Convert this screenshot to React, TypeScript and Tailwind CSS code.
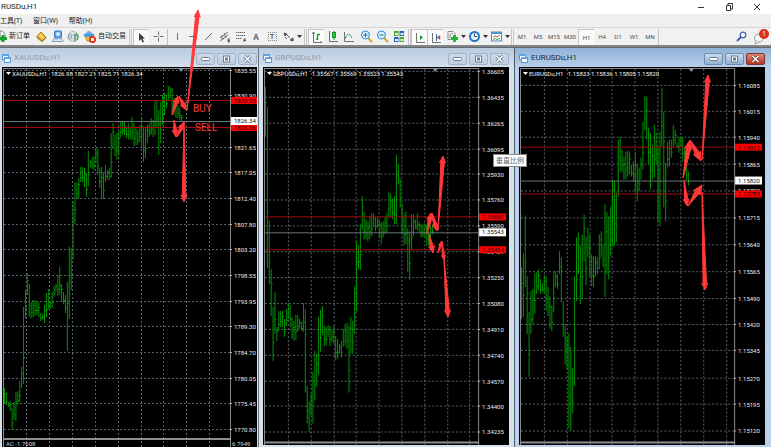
import React from 'react';

type Bar = [number, number];
type Level = { y: number; label: string };

interface ChartProps {
  viewBox: string;
  left: number;
  right: number;
  bottom: number;
  symbol: string;
  quote: string;
  gridX: number[];
  levels: Level[];
  bars: Bar[];
  orders: Level[];
  price: Level;
  marker: number;
  children?: React.ReactNode;
}

const xauBars: Bar[] = [
  [388, 403], [393, 405], [402, 407], [401, 411], [408, 430], [402, 420], [392, 421], [391, 405], [381, 402], [367, 388],
  [307, 384], [290, 318], [273, 295], [284, 317], [302, 318], [300, 317], [300, 316], [302, 315], [302, 317], [313, 321],
  [314, 319], [305, 323], [293, 317], [289, 309], [301, 309], [292, 308], [286, 297], [284, 292], [275, 296], [267, 295],
  [284, 302], [292, 304], [295, 313], [282, 351], [247, 319], [248, 290], [202, 260], [182, 224], [183, 198], [178, 199],
  [167, 182], [167, 182], [168, 187], [173, 197], [151, 186], [160, 168], [157, 169], [156, 170], [148, 163], [149, 175],
  [168, 188], [167, 199], [172, 199], [165, 182], [170, 180], [168, 180], [133, 178], [123, 149], [135, 156], [133, 160],
  [131, 155], [122, 137], [121, 135], [122, 135], [127, 138], [123, 140], [127, 139], [117, 140], [123, 146], [128, 145],
  [130, 145], [125, 142], [118, 146], [127, 162], [128, 158], [125, 143], [123, 137], [118, 135], [120, 137], [100, 135],
  [100, 127], [110, 155], [102, 143], [95, 125], [93, 115], [95, 108], [86, 100], [87, 98], [88, 115], [98, 115],
  [100, 118], [105, 118], [107, 120], [115, 122],
];

const gbpBars: Bar[] = [
  [87, 137], [107, 269], [221, 285], [270, 317], [308, 362], [293, 335], [328, 342], [312, 332], [312, 328], [312, 328],
  [320, 338], [310, 327], [304, 320], [306, 328], [318, 340], [322, 342], [316, 341], [316, 333], [320, 330], [323, 332],
  [304, 333], [310, 394], [387, 425], [403, 433], [395, 417], [373, 425], [352, 402], [355, 388], [318, 376], [311, 353],
  [307, 336], [327, 347], [328, 347], [326, 338], [327, 347], [330, 343], [327, 345], [337, 361], [340, 360], [345, 355],
  [342, 359], [330, 348], [325, 347], [324, 350], [327, 394], [318, 355], [322, 355], [287, 335], [242, 312], [246, 270],
  [225, 271], [197, 230], [213, 240], [220, 240], [222, 242], [217, 240], [214, 237], [214, 228], [218, 232], [218, 228],
  [220, 238], [223, 245], [222, 238], [218, 235], [214, 233], [192, 218], [194, 218], [199, 220], [197, 225], [155, 225],
  [164, 185], [179, 208], [204, 235], [215, 246], [212, 245], [229, 273], [232, 281], [215, 251], [215, 237], [220, 230],
  [214, 231], [222, 233], [225, 238], [225, 238], [224, 238], [225, 246], [232, 246], [225, 238], [225, 235],
];

const eurBars: Bar[] = [
  [268, 320], [254, 318], [216, 288], [277, 335], [313, 378], [292, 335], [290, 325], [274, 315], [273, 295], [270, 291],
  [280, 295], [284, 293], [276, 295], [277, 312], [288, 317], [297, 330], [307, 332], [272, 313], [272, 288], [275, 290],
  [252, 275], [258, 303], [302, 338], [327, 366], [338, 371], [334, 430], [348, 432], [369, 415], [277, 387], [238, 302],
  [233, 275], [247, 305], [235, 300], [215, 262], [237, 286], [228, 258], [235, 278], [255, 287], [257, 288], [257, 277],
  [258, 275], [235, 270], [232, 258], [245, 268], [205, 298], [213, 275], [217, 280], [207, 257], [180, 247], [182, 247],
  [193, 243], [140, 197], [137, 172], [150, 173], [157, 180], [152, 180], [151, 177], [152, 175], [165, 177], [162, 182],
  [153, 192], [165, 202], [168, 192], [158, 180], [122, 170], [96, 130], [97, 140], [128, 165], [133, 190], [145, 180],
  [125, 178], [133, 165], [147, 223], [132, 227], [88, 147], [112, 208], [163, 222], [142, 168], [140, 167], [140, 158],
  [125, 148], [130, 145], [143, 148], [137, 153], [137, 147], [137, 162], [148, 175], [158, 181], [172, 186],
];

const xauLevels: Level[] = [
  { y: 70, label: '1835.55' }, { y: 95, label: '1830.90' }, { y: 121, label: '' }, { y: 147, label: '1821.65' },
  { y: 172, label: '1817.05' }, { y: 198, label: '1812.40' }, { y: 224, label: '1807.80' }, { y: 249, label: '1803.20' },
  { y: 275, label: '1798.55' }, { y: 301, label: '1793.95' }, { y: 326, label: '1789.30' }, { y: 352, label: '1784.70' },
  { y: 378, label: '1780.05' }, { y: 403, label: '1775.45' }, { y: 429, label: '1770.80' },
];

const gbpLevels: Level[] = [
  { y: 71, label: '1.36605' }, { y: 97, label: '1.36435' }, { y: 123, label: '1.36265' }, { y: 149, label: '1.36095' },
  { y: 174, label: '1.35930' }, { y: 200, label: '1.35760' }, { y: 226, label: '1.35590' }, { y: 252, label: '1.35421' },
  { y: 278, label: '1.35250' }, { y: 304, label: '1.35080' }, { y: 330, label: '1.34910' }, { y: 356, label: '1.34740' },
  { y: 382, label: '1.34570' }, { y: 407, label: '1.34400' }, { y: 433, label: '1.34235' },
];

const eurLevels: Level[] = [
  { y: 85, label: '1.16085' }, { y: 111, label: '1.16015' }, { y: 137, label: '1.15940' }, { y: 164, label: '1.15865' },
  { y: 191, label: '1.15790' }, { y: 218, label: '1.15715' }, { y: 245, label: '1.15640' }, { y: 272, label: '1.15565' },
  { y: 299, label: '1.15490' }, { y: 325, label: '1.15420' }, { y: 351, label: '1.15345' }, { y: 379, label: '1.15270' },
  { y: 405, label: '1.15195' }, { y: 432, label: '1.15120' },
];

const Chart: React.FC<ChartProps> = (props) => {
  const { viewBox, left, right, bottom, symbol, quote, gridX, levels, bars, orders, price, marker, children } = props;
  return (
    <svg viewBox={viewBox} className="block w-full h-auto bg-black font-['Roboto',sans-serif] text-[6px]">
      {/* Grid */}
      <g stroke="#56636f" strokeWidth="1" strokeDasharray="2 2">
        {gridX.map((x) => (
          <line key={x} x1={x + 0.5} x2={x + 0.5} y1="69" y2="447" />
        ))}
        {levels.map((l) => (
          <line key={l.y} x1={left} x2={right} y1={l.y + 0.5} y2={l.y + 0.5} />
        ))}
      </g>

      {/* Price bars */}
      <g stroke="#009400" strokeWidth="1">
        {bars.map(([high, low], i) => {
          const x = left + 0.5 + i * 1.905;
          const open = Math.round(high + (low - high) * (i % 3 === 0 ? 0.3 : 0.65)) + 0.5;
          return <path key={i} d={`M${x} ${high}V${low}M${x} ${open}h1.500`} />;
        })}
      </g>

      {/* Frame */}
      <path d={`M${left - 0.5} 447V68.5H${right + 0.5}V447`} fill="none" stroke="#8c8c8c" />
      <rect x={left - 1} y={bottom} width={right - left + 2} height="2" fill="#8e8e8e" />
      <path d={`M${marker - 3} 68h6l-3 4z`} fill="#8195a8" />

      {levels.map((l) => (
        <g key={l.y}>
          <line x1={right} x2={right + 2} y1={l.y + 0.5} y2={l.y + 0.5} stroke="#b0b0b0" />
          <text x={right + 4} y={l.y + 3} fill="#ececec">{l.label}</text>
        </g>
      ))}

      {/* Order levels and current price */}
      <line x1={left} x2={right} y1={price.y + 0.5} y2={price.y + 0.5} stroke="#66727c" />
      {orders.map((o) => (
        <g key={o.y}>
          <line x1={left} x2={right} y1={o.y + 0.5} y2={o.y + 0.5} stroke="#a00a0a" />
          <rect x={right + 1} y={o.y - 3} width="27" height="7" fill="#ff0000" />
          <text x={right + 4} y={o.y + 3} fill="#2a0000">{o.label}</text>
        </g>
      ))}
      <rect x={right + 1} y={price.y - 4} width="27" height="8" fill="#ffffff" />
      <text x={right + 4} y={price.y + 2} fill="#111111">{price.label}</text>

      <path d={`M${left + 2} 72h5l-2.500 3z`} fill="#ffffff" />
      <text x={left + 8} y="76" fill="#f4f4f4">{symbol}</text>
      <text x={left + 47} y="76" fill="#f4f4f4">{quote}</text>
      {children}
    </svg>
  );
};

const ChartWindow: React.FC<{ title: string; active?: boolean; className: string; children: React.ReactNode }> = ({
  title,
  active,
  className,
  children,
}) => {
  const button = active
    ? 'w-[19px] h-3 rounded-[2px] border border-[#6f8cad] bg-linear-to-b from-[#c9dcf0] to-[#92b1d4] flex items-center justify-center'
    : 'w-[19px] h-3 rounded-[2px] border border-[#a3b3c5] bg-linear-to-b from-[#cddae8] to-[#bccddf] flex items-center justify-center';
  const close = active
    ? 'w-[19px] h-3 rounded-[2px] border border-[#7b3230] bg-linear-to-b from-[#dc8a7c] to-[#b83420] flex items-center justify-center'
    : button;
  return (
    <section
      className={`min-w-0 border-t border-[#5f6972] ${
        active ? 'bg-linear-to-b from-[#91b2d8] to-[#b9d1ea] to-5%' : 'bg-linear-to-b from-[#b9cbdf] to-[#d6e1ee] to-5%'
      } ${className}`}
    >
      <header className="h-[19px] flex items-center justify-between">
        <div className="flex items-center gap-[3px]">
          <svg width="9" height="10" viewBox="0 0 9 10">
            <path d="M.5 1.500h6v5h-6z" fill="#fff" stroke="#4e94dc" />
            <path d="M0 1h7v2H0z" fill="#5ba2e6" />
            <path d="M2.500 4.500h6v5h-6z" fill="#fff" stroke="#4e94dc" />
            <path d="M2 4h7v2H2z" fill="#5ba2e6" />
          </svg>
          <h2
            className={`font-['Roboto',sans-serif] text-[8px] leading-none ${
              active ? 'text-[#1c2733]' : 'text-[#8d99a6]'
            }`}
          >
            {title}
          </h2>
        </div>
        <div className="flex gap-0.5 pt-0.5">
          <button className={button} aria-label="Minimize">
            <svg width="9" height="4"><rect x=".5" y=".5" width="8" height="3" rx="1" fill="#fff" stroke="#697b8e" /></svg>
          </button>
          <button className={button} aria-label="Maximize">
            <svg width="9" height="8">
              <rect x="1.500" y="1" width="6" height="6" fill="#fff" stroke="#697b8e" />
              <rect x="3.500" y="3" width="2" height="2" fill="#9fb4ca" stroke="#697b8e" />
            </svg>
          </button>
          <button className={close} aria-label="Close">
            <svg width="9" height="8" fill="none">
              <path d="M1.500 1l6 6M7.500 1l-6 6" stroke={active ? '#6d2a25' : '#5d6e80'} strokeWidth="3" />
              <path d="M1.500 1l6 6M7.500 1l-6 6" stroke="#fff" strokeWidth="1.500" />
            </svg>
          </button>
        </div>
      </header>
      {children}
    </section>
  );
};

const Tool: React.FC<{ label: string; pressed?: boolean; wide?: string; children: React.ReactNode }> = ({
  label,
  pressed,
  wide,
  children,
}) => (
  <button
    aria-label={label}
    className={`${wide ?? 'w-4'} h-4 shrink-0 flex items-center justify-center gap-0.5 ${
      pressed ? 'border-l border-t border-[#c4c4c4] bg-[#fafafa]' : ''
    }`}
  >
    <svg width="13" height="13" viewBox="0 0 13 13" fill="none" stroke="#6f6f6f" className="shrink-0">
      {children}
    </svg>
    {wide && (
      <svg width="5" height="3" className="shrink-0"><path d="M0 0h5L2.500 3z" fill="#333" /></svg>
    )}
  </button>
);

const Divider = () => <div className="w-px h-4 shrink-0 bg-[#c2c2c2]" />;
const Grip = () => <div className="w-[3px] h-4 shrink-0 border-x border-[#c6c6c6]" />;

const periods = ['M1', 'M5', 'M15', 'M30', 'H1', 'H4', 'D1', 'W1', 'MN'];

const Toolbar = () => (
  <div className="h-[18px] flex items-center border-t border-[#d6d6d6] bg-[#f1f1f1] text-[7px] overflow-hidden">
    <button className="flex items-center gap-0.5 h-4 shrink-0">
      <svg width="7" height="13" viewBox="0 0 7 13">
        <path d="M0 1h2l3 3v6H0z" fill="#f4f4f4" stroke="#888" />
        <path d="M3 5v7M0 8.500h7" stroke="#14a52a" strokeWidth="3" />
      </svg>
      新订单
    </button>
    <div className="flex pl-[3px]">
      <Tool label="Metaeditor">
        <path d="M2 6l4-4 5 5-4 4z" fill="#f2c04a" stroke="#b9801a" />
        <path d="M2 6v2l5 4 4-4V7l-4 4z" fill="#c98f22" stroke="#a87014" strokeWidth=".5" />
        <path d="M5 5l3 3" stroke="#fff1b8" />
      </Tool>
      <Tool label="Data center">
        <rect x="3.500" y="1" width="7" height="7" rx="1" fill="#5da3e4" stroke="#3a7fc4" />
        <circle cx="7" cy="4" r="2" fill="#d5eaff" stroke="none" />
        <path d="M1.500 11.500c0-3 3-3 4-2 1-2 5-1 5 0 2 0 2 2 1 2z" fill="#dbe8f5" stroke="#7c9dbd" />
      </Tool>
      <Tool label="Signals">
        <circle cx="6" cy="6.500" r="5" fill="#e1e5e8" stroke="#b4bcc2" />
        <path d="M3 3a5 5 0 0 0 0 7M5 4a4 4 0 0 0 0 5" stroke="#7993a8" />
        <circle cx="8" cy="5.500" r="1.500" fill="#5b8fb8" stroke="none" />
        <path d="M8 7v4.500M9 3a5 5 0 0 1 1 7" stroke="#4ba455" strokeWidth="1.500" />
      </Tool>
    </div>
    <button className="flex items-center gap-0.5 h-4 shrink-0 pl-0.5">
      <svg width="13" height="13" viewBox="0 0 13 13">
        <path d="M2 6h8l-1 5H4z" fill="#f3c232" stroke="#b98a16" />
        <ellipse cx="6" cy="5" rx="5.500" ry="2" fill="#4f97d6" />
        <path d="M3 4c0-4 6-4 6 0z" fill="#6db1e8" />
        <circle cx="9.500" cy="9.500" r="3.500" fill="#e0301e" />
        <rect x="8" y="8" width="3" height="3" fill="#fff" />
      </svg>
      自动交易
    </button>
    <div className="flex items-center pl-[3px] gap-px">
      <Grip />
      <Tool label="Cursor" pressed>
        <path d="M4 2v8l2-2 1.500 3.500 1.500-.7L7.500 7.500H10z" fill="#3c3c3c" stroke="none" />
      </Tool>
      <Tool label="Crosshair"><path d="M6.500 1.500v4M6.500 7.500v4M1.500 6.500h4M7.500 6.500h4" /></Tool>
      <Divider />
    </div>
    <div className="flex items-center">
      <Tool label="Vertical line"><path d="M7.500 3v7" /></Tool>
      <Tool label="Horizontal line"><path d="M3 6.500h7" /></Tool>
      <Tool label="Trendline"><path d="M3 10l7-7" /></Tool>
      <Tool label="Channel">
        <path d="M2 8l8-6M2 11l8-6M3 5l2 5M6 3l2 5" />
        <path d="M12 9h-2v3h2M10 10.500h2" stroke="#333" strokeWidth=".8" />
      </Tool>
      <Tool label="Fibonacci">
        <path d="M2 2.500h9M2 5.500h9M2 8.500h6" strokeDasharray="1.500 .5" />
        <path d="M10 12V9h2M10 10.500h2" stroke="#333" strokeWidth=".8" />
      </Tool>
    </div>
    <button className="w-4 shrink-0 text-[8px] font-bold text-[#666]">A</button>
    <button className="w-4 shrink-0 flex justify-center" aria-label="Text label">
      <span className="w-[9px] h-[9px] border border-dotted border-[#888] text-[7px] leading-[7px] font-bold text-[#666]">T</span>
    </button>
    <Tool label="Arrows" wide="w-6">
      <path d="M2 3l3 1-2 2zM5 5l3 3M8 10l3-2v3zM3 7.500l2 1" fill="#555" stroke="#555" />
    </Tool>
    <Grip />
    <div className="flex items-center pl-px">
      <Tool label="Bar chart" pressed>
        <path d="M3.500 1v10.500H12M2 3l1.500-2L5 3M10.500 10l1.500 1.500" />
        <path d="M7.500 3v6M7 8H6M8 3.500h2" stroke="#159a2c" strokeWidth="1.300" />
      </Tool>
      <Tool label="Candlesticks">
        <path d="M3.500 1v10.500H12" />
        <path d="M8 1v9" stroke="#159a2c" />
        <rect x="6.500" y="2.500" width="3" height="5" fill="#29c13e" stroke="#159a2c" />
      </Tool>
      <Tool label="Line chart">
        <path d="M2.500 2v9.500H12" />
        <path d="M3 9c2-6 5-6 7-1" stroke="#3c9a4a" />
      </Tool>
    </div>
    <div className="flex px-0.5">
      <Tool label="Zoom in">
        <path d="M8 8l4 4" stroke="#d3a52c" strokeWidth="2" />
        <circle cx="5.500" cy="5" r="4" fill="#d9eeff" stroke="#3286cc" />
        <path d="M3.500 5h4M5.500 3v4" stroke="#1e6fb6" />
      </Tool>
      <Tool label="Zoom out">
        <path d="M8 8l4 4" stroke="#d3a52c" strokeWidth="2" />
        <circle cx="5.500" cy="5" r="4" fill="#d9eeff" stroke="#3286cc" />
        <path d="M3.500 5h4" stroke="#1e6fb6" />
      </Tool>
      <Tool label="Tile windows">
        <path d="M2 1h4.500v5H2zM7.500 7H12v5H7.500z" fill="#48a82c" stroke="none" />
        <path d="M7.500 1H12v5H7.500zM2 7h4.500v5H2z" fill="#2a61b8" stroke="none" />
        <path d="M3 3h3v2H3zM8.500 3h3v2h-3zM3 9h3v2H3zM8.500 9h3v2h-3z" fill="#e4f0e8" stroke="none" />
      </Tool>
    </div>
    <Grip />
    <div className="flex items-center pr-0.5">
      <Tool label="Auto scroll" pressed>
        <path d="M3.500 2v9.500H12" />
        <path d="M7 4l3 2.500L7 9z" fill="#159a2c" stroke="none" />
      </Tool>
      <Tool label="Chart shift" pressed>
        <path d="M3.500 2v9.500H12" />
        <path d="M7.500 3v7" stroke="#2a6cab" />
        <path d="M8 6.500l3-2v4z" fill="#cb4a20" stroke="#cb4a20" strokeWidth=".5" />
      </Tool>
    </div>
    <div className="flex items-center">
      <Tool label="Indicators" wide="w-[22px]">
        <path d="M2 1.500h5l2 2v6H2z" fill="#fff" stroke="#8a8a8a" />
        <path d="M4 8c0-5 1-5 3-4" />
        <path d="M8.500 5v7M5 8.500h7" stroke="#1cb332" strokeWidth="2.800" />
      </Tool>
      <Tool label="Periods" wide="w-[22px]">
        <circle cx="6.500" cy="6.500" r="4.500" fill="#eef6ff" stroke="#2374c8" strokeWidth="2" />
        <path d="M6.500 3.500v3H9" stroke="#36495b" />
      </Tool>
      <Tool label="Templates" wide="w-[22px]">
        <rect x="1.500" y="2" width="10" height="9" fill="#fff" stroke="#5486b4" />
        <path d="M1 3h11" stroke="#4d97d8" strokeWidth="2" />
        <path d="M3 7l2-1 2 1 3-2" stroke="#b05a40" />
        <path d="M3 9.500l2-1 2 1 3-1" stroke="#349a54" />
      </Tool>
      <Grip />
    </div>
    <div className="flex items-center text-[#4f4f4f] text-[6px] font-['Roboto',sans-serif]">
      {periods.map((p) => (
        <button
          key={p}
          className={`w-4 h-4 shrink-0 text-center ${p === 'H1' ? 'border-l border-t border-[#c4c4c4] bg-[#fafafa]' : ''}`}
        >
          {p}
        </button>
      ))}
    </div>
    <Divider />
    <div className="ml-auto flex items-center gap-1 pr-0.5">
      <Tool label="Search">
        <path d="M6 7l-4 4" stroke="#3b62b5" strokeWidth="2" />
        <circle cx="8" cy="5" r="2.800" fill="#fff" stroke="#3b62b5" strokeWidth="1.300" />
      </Tool>
      <button className="relative w-4 h-4 shrink-0" aria-label="Notifications">
        <svg width="16" height="16" viewBox="0 0 16 16">
          <ellipse cx="6" cy="9" rx="4.500" ry="4" fill="#f5f5f5" stroke="#9c9c9c" />
          <path d="M3 11l-1 4 4-2" fill="#e6e6e6" stroke="#9c9c9c" strokeWidth=".8" />
        </svg>
        <span className="absolute right-0 top-0 w-[10px] h-[10px] rounded-full bg-[#dc2f1d] text-white text-[7px] leading-[10px] text-center">
          1
        </span>
      </button>
    </div>
  </div>
);

// Tapered arrow: a point at the tail, widest just behind the head
const Arrow = ({ from, to, size = 4 }: { from: Bar; to: Bar; size?: number }) => {
  const dx = to[0] - from[0];
  const dy = to[1] - from[1];
  const len = Math.hypot(dx, dy);
  const ux = dx / len;
  const uy = dy / len;
  const at = (back: number, side: number) =>
    `${to[0] - ux * back - uy * side},${to[1] - uy * back + ux * side}`;
  const points = [
    `${from[0]},${from[1]}`,
    at(size * 2, size * 0.6),
    at(size * 2.3, size),
    `${to[0]},${to[1]}`,
    at(size * 2.3, -size),
    at(size * 2, -size * 0.6),
  ].join(' ');
  return <polygon points={points} fill="#ff3838" stroke="#ff3838" strokeWidth="1" strokeLinejoin="round" />;
};

const arrows: { from: Bar; to: Bar; size?: number }[] = [
  { from: [187, 110], to: [198, 10], size: 3 },
  { from: [172, 115], to: [178, 96], size: 3 },
  { from: [179, 96], to: [186, 110], size: 3 },
  { from: [174, 120], to: [176, 137], size: 3 },
  { from: [177, 137], to: [184, 122], size: 3 },
  { from: [184, 122], to: [184, 202], size: 3 },
  { from: [427, 234], to: [431, 213], size: 3 },
  { from: [432, 213], to: [437, 231], size: 3 },
  { from: [438, 230], to: [443, 156], size: 3 },
  { from: [429, 234], to: [433, 253], size: 3 },
  { from: [438, 253], to: [442, 241], size: 2 },
  { from: [442, 242], to: [444, 260], size: 2 },
  { from: [444, 258], to: [448, 317], size: 3 },
  { from: [683, 178], to: [690, 140], size: 4 },
  { from: [691, 141], to: [701, 161], size: 4 },
  { from: [702, 160], to: [708, 75], size: 3 },
  { from: [684, 180], to: [687, 206], size: 3 },
  { from: [688, 206], to: [702, 185], size: 4 },
  { from: [702, 192], to: [705, 290], size: 3 },
];

export default function App() {
  return (
    <div className="relative min-h-screen overflow-hidden bg-[#8b9197] font-['Noto_Sans','Noto_Sans_CJK_SC',sans-serif] text-[#222] select-none">
      {/* Title bar */}
      <div className="h-3.5 flex items-center justify-between bg-white">
        <h1 className="pl-px font-['Roboto',sans-serif] text-[8px] leading-none">RUSDu,H1</h1>
        <div className="flex items-center gap-4 pr-2">
          <button aria-label="Minimize"><svg width="12" height="8" className="block"><path d="M3 4.500h6" stroke="#333" /></svg></button>
          <button aria-label="Restore">
            <svg width="12" height="8" className="block" fill="none" stroke="#333"><path d="M3.500 2.500h4v5h-4zM5 2V.500h4.500V6H8" /></svg>
          </button>
          <button aria-label="Close"><svg width="12" height="8" className="block"><path d="M3 1l6 6M9 1L3 7" stroke="#333" /></svg></button>
        </div>
      </div>

      {/* Menu */}
      <nav className="h-[13px] flex items-center gap-[11px] bg-[#efefef] text-[7px] leading-none">
        <button>工具(T)</button>
        <button>窗口(W)</button>
        <button>帮助(H)</button>
      </nav>

      <Toolbar />

      {/* Chart windows */}
      <main className="grid grid-cols-[258fr_256fr_257fr] border-t-2 border-[#858585]">
        <ChartWindow title="XAUUSDu,H1" className="pl-[2px] pr-px">
          <Chart
            viewBox="2 67 255 380" left={4} right={230} bottom={438} marker={181}
            symbol="XAUUSDu,H1" quote="1826.98 1827.21 1825.71 1826.34"
            gridX={[26, 49, 72, 95, 118, 141, 163, 186, 209]}
            levels={xauLevels} bars={xauBars}
            orders={[{ y: 100, label: '1830.05' }, { y: 127, label: '1825.06' }]}
            price={{ y: 121, label: '1826.34' }}
          >
            <text x="6" y="446" fill="#d8d8d8">AC -1.7608</text>
            <text x="232" y="446" fill="#d8d8d8">6.7949</text>
          </Chart>
        </ChartWindow>
        <ChartWindow title="GBPUSDu,H1" className="pl-1 pr-[5px] border-l border-l-[#6c7882]">
          <Chart
            viewBox="262 67 247 380" left={264} right={478} bottom={443} marker={435}
            symbol="GBPUSDu,H1" quote="1.35567 1.35569 1.35523 1.35543"
            gridX={[287, 310, 333, 355, 378, 401, 424, 447, 469]}
            levels={gbpLevels} bars={gbpBars}
            orders={[{ y: 217, label: '1.35650' }, { y: 250, label: '1.35434' }]}
            price={{ y: 233, label: '1.35543' }}
          />
        </ChartWindow>
        <ChartWindow title="EURUSDu,H1" active className="pl-1 pr-[6px] border-l border-l-[#4d5b68]">
          <Chart
            viewBox="518 67 247 380" left={520} right={734} bottom={443} marker={691}
            symbol="EURUSDu,H1" quote="1.15833 1.15836 1.15805 1.15820"
            gridX={[543, 566, 589, 611, 634, 657, 680, 703, 726]}
            levels={eurLevels} bars={eurBars}
            orders={[{ y: 147, label: '1.15912' }, { y: 194, label: '1.15783' }]}
            price={{ y: 181, label: '1.15820' }}
          />
        </ChartWindow>
      </main>

      {/* Drawn annotations */}
      <svg viewBox="0 0 771 447" className="absolute left-0 top-0 w-full h-auto pointer-events-none font-['Roboto',sans-serif] text-[10px]">
        {arrows.map((a, i) => (
          <Arrow key={i} {...a} />
        ))}
        <text x="193" y="112" fill="#ff3838">BUY</text>
        <text x="195" y="131" fill="#ff3838">SELL</text>
      </svg>

      <div
        role="tooltip"
        className="absolute left-[493px] top-[154px] px-0.5 border border-[#8a8a8a] bg-white text-[7px] leading-[11px] text-[#666]"
      >
        垂直比例
      </div>
    </div>
  );
}
